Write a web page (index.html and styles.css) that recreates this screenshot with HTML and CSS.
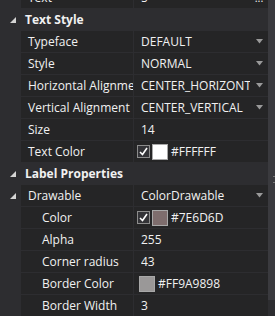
FILE: index.html
```html
<!DOCTYPE html>
<html lang="en">
<head>
    <meta charset="UTF-8">
    <title>Properties</title>
    <link rel="stylesheet" href="styles.css">
</head>
<body>
<div class="panel">
    <div class="grid">
        <!-- cut off row at the top -->
        <div class="row first">
            <div class="gutter"></div>
            <div class="name">Text</div>
            <div class="value"><span class="text">5</span><span class="more">...</span></div>
        </div>

        <div class="row head">
            <div class="gutter"><svg class="exp" width="6" height="6" viewBox="0 0 6 6"><path d="M6 0V6H0Z"/></svg></div>
            <div class="title">Text Style</div>
        </div>
        <div class="row">
            <div class="gutter"></div>
            <div class="name">Typeface</div>
            <div class="value"><span class="text">DEFAULT</span><span class="arrow"><svg width="7" height="5" viewBox="0 0 7 5"><path d="M0 0H7L3.5 4.5Z"/></svg></span></div>
        </div>
        <div class="row">
            <div class="gutter"></div>
            <div class="name">Style</div>
            <div class="value"><span class="text">NORMAL</span><span class="arrow"><svg width="7" height="5" viewBox="0 0 7 5"><path d="M0 0H7L3.5 4.5Z"/></svg></span></div>
        </div>
        <div class="row">
            <div class="gutter"></div>
            <div class="name">Horizontal Alignment</div>
            <div class="value"><span class="text">CENTER_HORIZONTAL</span><span class="arrow"><svg width="7" height="5" viewBox="0 0 7 5"><path d="M0 0H7L3.5 4.5Z"/></svg></span></div>
        </div>
        <div class="row">
            <div class="gutter"></div>
            <div class="name">Vertical Alignment</div>
            <div class="value"><span class="text">CENTER_VERTICAL</span><span class="arrow"><svg width="7" height="5" viewBox="0 0 7 5"><path d="M0 0H7L3.5 4.5Z"/></svg></span></div>
        </div>
        <div class="row">
            <div class="gutter"></div>
            <div class="name">Size</div>
            <div class="value"><span class="text">14</span></div>
        </div>
        <div class="row">
            <div class="gutter"></div>
            <div class="name">Text Color</div>
            <div class="value">
                <span class="check"><svg width="9" height="9" viewBox="0 0 9 9"><path d="M1 5L3.5 7.5L8 1" /></svg></span>
                <span class="swatch white"></span>
                <span class="hex">#FFFFFF</span>
            </div>
        </div>

        <div class="row head">
            <div class="gutter"><svg class="exp" width="6" height="6" viewBox="0 0 6 6"><path d="M6 0V6H0Z"/></svg></div>
            <div class="title">Label Properties</div>
        </div>
        <div class="row">
            <div class="gutter"><svg class="exp" width="6" height="6" viewBox="0 0 6 6"><path d="M6 0V6H0Z"/></svg></div>
            <div class="name">Drawable</div>
            <div class="value"><span class="text">ColorDrawable</span><span class="arrow"><svg width="7" height="5" viewBox="0 0 7 5"><path d="M0 0H7L3.5 4.5Z"/></svg></span></div>
        </div>
        <div class="row">
            <div class="gutter"></div>
            <div class="name sub">Color</div>
            <div class="value">
                <span class="check"><svg width="9" height="9" viewBox="0 0 9 9"><path d="M1 5L3.5 7.5L8 1" /></svg></span>
                <span class="swatch brown"></span>
                <span class="hex">#7E6D6D</span>
            </div>
        </div>
        <div class="row">
            <div class="gutter"></div>
            <div class="name sub">Alpha</div>
            <div class="value"><span class="text">255</span></div>
        </div>
        <div class="row">
            <div class="gutter"></div>
            <div class="name sub">Corner radius</div>
            <div class="value"><span class="text">43</span></div>
        </div>
        <div class="row">
            <div class="gutter"></div>
            <div class="name sub">Border Color</div>
            <div class="value">
                <span class="swatch grey"></span>
                <span class="hex">#FF9A9898</span>
            </div>
        </div>
        <div class="row">
            <div class="gutter"></div>
            <div class="name sub">Border Width</div>
            <div class="value"><span class="text">3</span></div>
        </div>
    </div>

    <div class="scroll">
        <div class="thumb"><span class="grip"></span></div>
    </div>
</div>
</body>
</html>
```

FILE: styles.css
```css
body {
    margin: 0;
    background-color: #2d2d30;
    font-family: "Open Sans", "Noto Sans", sans-serif;
    font-size: 12px;
    color: #f1f1f1;
    overflow: hidden;
}

.panel {
    display: flex;
    width: 275px;
    height: 316px;
}

.grid {
    flex: 1;
    min-width: 0;
    margin-top: -13px;
}

.row {
    display: flex;
    height: 21px;
    border-bottom: 1px solid #2d2d30;
}

.gutter {
    width: 21px;
    flex: none;
    display: flex;
    align-items: center;
    padding-left: 10px;
    box-sizing: border-box;
}

.exp {
    fill: #d4d4d4;
}

.name {
    width: 112px;
    flex: none;
    padding-left: 7px;
    box-sizing: border-box;
    background-color: #252526;
    line-height: 21px;
    white-space: nowrap;
    overflow: hidden;
}

.name.sub {
    padding-left: 21px;
}

.value {
    flex: 1;
    min-width: 0;
    margin-left: 1px;
    padding-left: 7px;
    display: flex;
    align-items: center;
    background-color: #252526;
    white-space: nowrap;
}

.text {
    flex: 1;
    min-width: 0;
    overflow: hidden;
}

.more {
    width: 18px;
    flex: none;
    text-align: center;
    font-size: 11px;
    line-height: 11px;
}

.arrow {
    width: 18px;
    flex: none;
    display: flex;
    justify-content: center;
    fill: #9a9a9a;
}

.title {
    padding-left: 4px;
    line-height: 21px;
    font-weight: bold;
}

.check {
    width: 11px;
    height: 11px;
    margin-left: -4px;
    border: 1px solid #8c8c8c;
    background-color: #333337;
    display: flex;
    align-items: center;
    justify-content: center;
}

.check path {
    fill: none;
    stroke: #ffffff;
    stroke-width: 1.6;
}

.swatch {
    width: 14px;
    height: 14px;
    margin-left: 2px;
    border: 1px solid #a8a8a8;
}

.swatch.white {
    background-color: #ffffff;
}

.swatch.brown {
    background-color: #7e6d6d;
}

.swatch.grey {
    margin-left: -2px;
    background-color: #9a9898;
}

.hex {
    margin-left: 3px;
}

.scroll {
    width: 7px;
    flex: none;
    background-color: #2d2d30;
}

.thumb {
    height: 300px;
    background-color: #3a3a3e;
    position: relative;
}

.grip {
    position: absolute;
    left: 5px;
    top: 176px;
    width: 2px;
    height: 5px;
    border-top: 1px solid #777;
    border-bottom: 1px solid #777;
}
```
